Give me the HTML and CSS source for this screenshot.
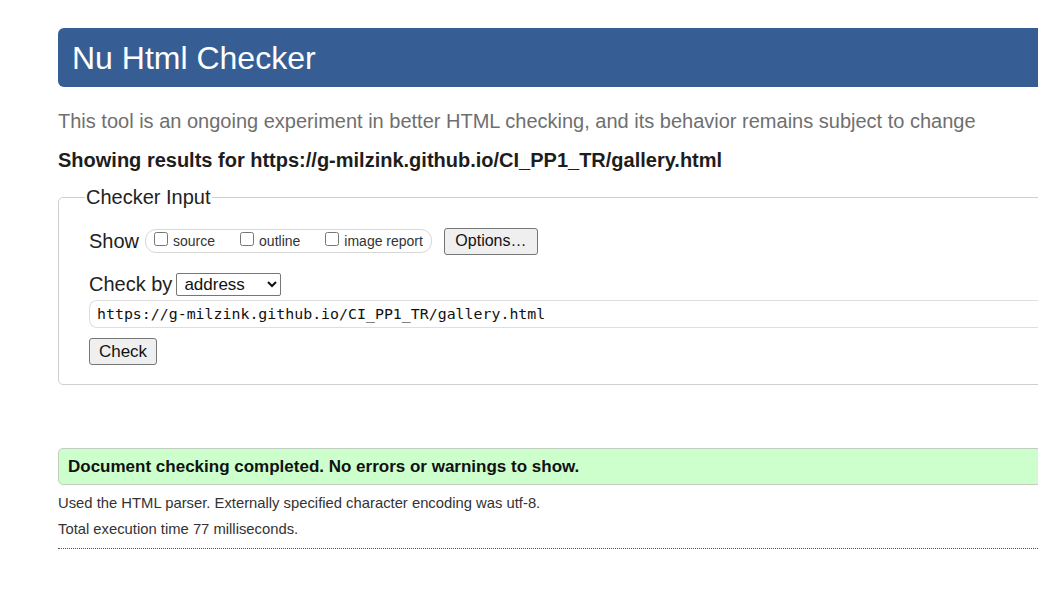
FILE: index.html
```html
<!DOCTYPE html>
<html lang="en">
<head>
<meta charset="utf-8">
<title>Nu Html Checker</title>
<link rel="stylesheet" href="styles.css">
</head>
<body>
<div class="page">
  <h1 class="banner">Nu Html Checker</h1>
  <p class="tagline">This tool is an ongoing experiment in better HTML checking, and its behavior remains subject to change</p>
  <p class="showing">Showing results for https://g-milzink.github.io/CI_PP1_TR/gallery.html</p>
  <fieldset class="input-box">
    <legend>Checker Input</legend>
    <div class="row show-row">
      <span class="lbl">Show</span>
      <span class="pill">
        <label class="opt"><input type="checkbox">source</label>
        <label class="opt"><input type="checkbox">outline</label>
        <label class="opt"><input type="checkbox">image report</label>
      </span>
      <button class="btn options" type="button">Options…</button>
    </div>
    <div class="row by-row">
      <span class="lbl">Check by</span>
      <select class="sel"><option>address</option></select>
    </div>
    <div class="url">https://g-milzink.github.io/CI_PP1_TR/gallery.html</div>
    <button class="btn check" type="button">Check</button>
  </fieldset>
  <div class="success">Document checking completed. No errors or warnings to show.</div>
  <p class="meta meta-first">Used the HTML parser. Externally specified character encoding was utf-8.</p>
  <p class="meta">Total execution time 77 milliseconds.</p>
  <hr class="dots">
</div>
</body>
</html>
```

FILE: styles.css
```css
html, body {
  margin: 0;
  padding: 0;
  background: #fff;
  overflow: hidden;
}
body {
  font-family: "Liberation Sans", Arial, sans-serif;
  color: #222;
}
.page {
  margin-left: 58px;
  width: 1060px;
  padding-top: 28px;
}
.banner {
  margin: 0;
  height: 59px;
  box-sizing: border-box;
  background: #365e95;
  color: #fff;
  font-weight: normal;
  font-size: 32px;
  line-height: 60px;
  padding-left: 14px;
  border-radius: 6px;
}
.tagline {
  margin: 20px 0 0;
  font-size: 20px;
  line-height: 28px;
  color: #6f6f6f;
}
.showing {
  margin: 13px 0 0;
  font-size: 20px;
  line-height: 24px;
  font-weight: bold;
  color: #1d1d1d;
}
.input-box {
  margin: 14px 0 0;
  padding: 18px 0 19px 30px;
  border: 1px solid #cfcfcf;
  border-radius: 5px;
  min-width: 0;
}
.input-box legend {
  font-size: 20px;
  line-height: 22px;
  color: #222;
  padding: 0 1px;
  margin-left: -4px;
}
.row {
  display: flex;
  align-items: center;
}
.lbl {
  font-size: 20px;
  color: #222;
}
.show-row {
  height: 30px;
}
.pill {
  display: inline-flex;
  align-items: center;
  margin-left: 6px;
  height: 24px;
  box-sizing: border-box;
  border: 1px solid #d8d8d8;
  border-radius: 11px;
  padding: 0 8px 0 8px;
  gap: 25px;
}
.opt {
  display: inline-flex;
  align-items: center;
  font-size: 14px;
  color: #333;
}
.opt input {
  width: 14px;
  height: 14px;
  margin: 0 5px 4px 0;
}
.btn {
  font-family: "Liberation Sans", Arial, sans-serif;
  background: #efefef;
  border: 1px solid #767676;
  border-radius: 3px;
  color: #111;
  padding: 0;
}
.options {
  margin-left: 12px;
  width: 94px;
  height: 27px;
  font-size: 16px;
}
.by-row {
  margin-top: 16px;
  height: 24px;
}
.sel {
  margin-left: 4px;
  width: 105px;
  height: 23px;
  font-family: "Liberation Sans", Arial, sans-serif;
  font-size: 17px;
  border: 1px solid #767676;
  border-radius: 2px;
  background: #fff;
  color: #111;
  padding: 0 0 0 3px;
}
.url {
  margin-top: 4px;
  height: 28px;
  box-sizing: border-box;
  border: 1px solid #dedede;
  border-right: none;
  border-radius: 8px 0 0 8px;
  padding-left: 7px;
  font-family: "DejaVu Sans Mono", monospace;
  font-size: 14.9px;
  line-height: 26px;
  color: #111;
}
.check {
  margin-top: 10px;
  width: 68px;
  height: 27px;
  font-size: 17px;
}
.success {
  margin-top: 63px;
  height: 37px;
  box-sizing: border-box;
  background: #ccffcc;
  border: 1px solid #c2cdc2;
  border-radius: 5px;
  padding-left: 9px;
  font-size: 17px;
  font-weight: bold;
  line-height: 35px;
  color: #111;
}
.meta {
  margin: 0;
  font-size: 14.8px;
  line-height: 26px;
  color: #333;
}
.meta-first {
  margin-top: 5px;
}
.dots {
  margin: 6px 0 0;
  border: none;
  border-top: 1px dotted #555;
  height: 0;
}
```
